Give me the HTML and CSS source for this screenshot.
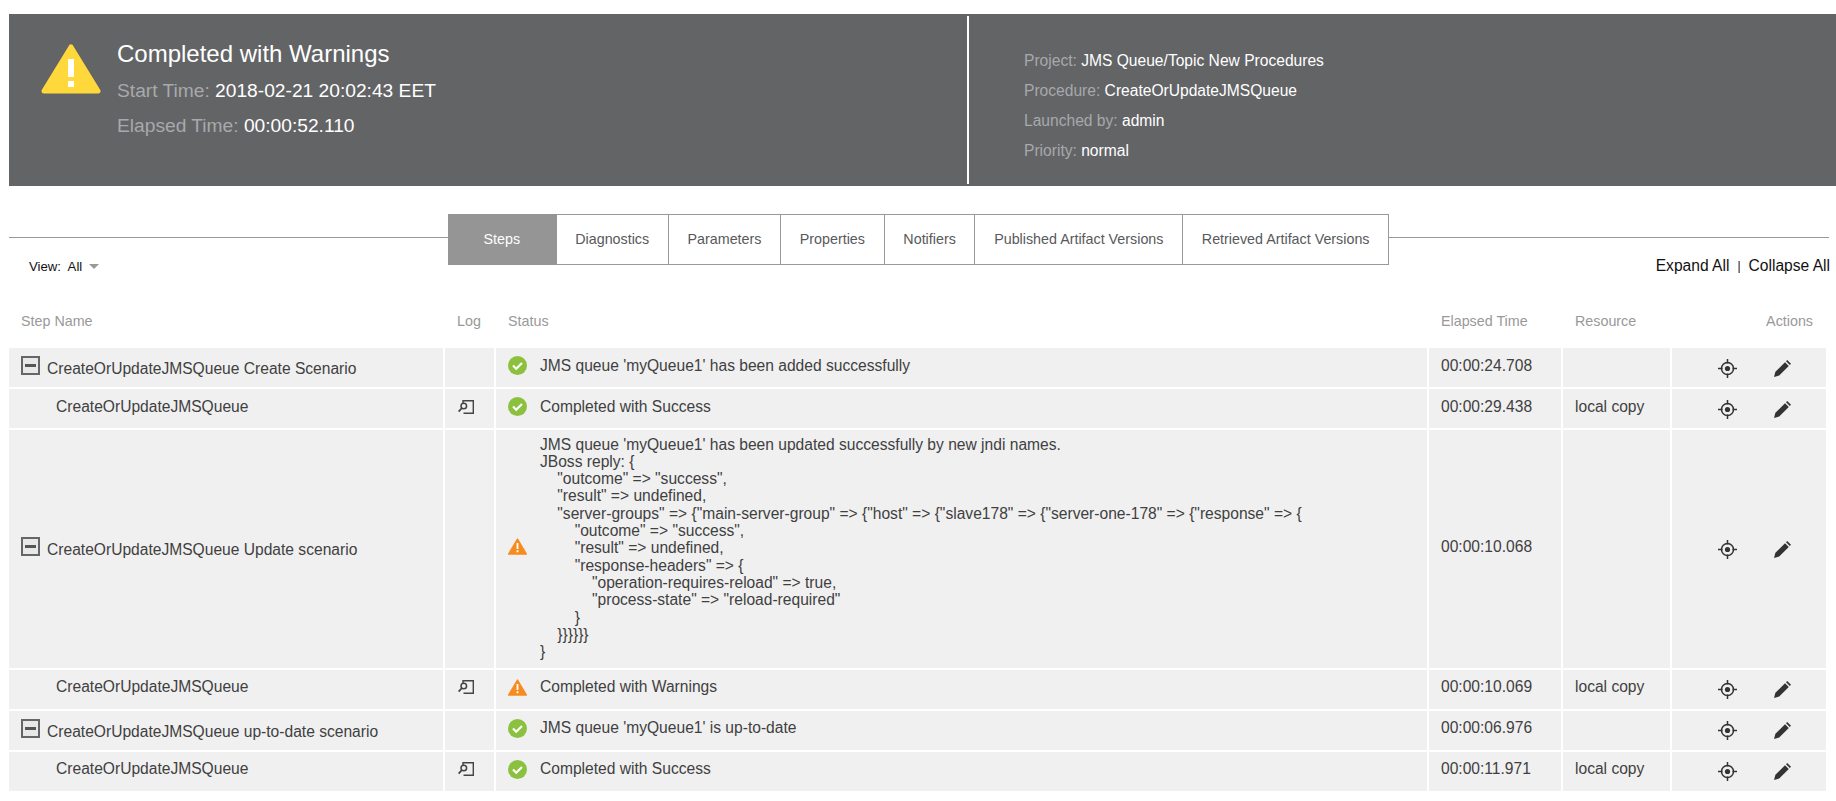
FILE: index.html
```html
<!DOCTYPE html>
<html lang="en">

<head>
    <meta charset="UTF-8">
    <meta name="viewport" content="width=device-width, initial-scale=1.0">
    <title>Job Details</title>
    <link rel="stylesheet" href="styles.css">
</head>

<body>
    <svg class="sprites" aria-hidden="true">
        <symbol id="ok" viewBox="0 0 19 19">
            <circle cx="9.5" cy="9.5" r="9.5" fill="#8cc13f" />
            <path d="M5 9.5l3.2 3.2L14 7" fill="none" stroke="#fff" stroke-width="2.2" />
        </symbol>
        <symbol id="warn" viewBox="0 0 19 17">
            <path d="M9.5 1L18.4 16H.6z" fill="#f68b1f" stroke="#f68b1f" stroke-width="1.4" stroke-linejoin="round" />
            <path d="M8.6 5h1.8v6H8.6zM8.6 12.3h1.8v2H8.6z" fill="#fff" />
        </symbol>
        <symbol id="log" viewBox="0 0 16 14">
            <path d="M5 3V.7H15.3V13.3H5.5" fill="none" stroke="#444" stroke-width="1.4" />
            <circle cx="5.8" cy="6" r="2.8" fill="none" stroke="#444" stroke-width="1.5" />
            <path d="M3.8 8.2L.6 11.6" stroke="#444" stroke-width="1.7" />
        </symbol>
        <symbol id="target" viewBox="0 0 19 19">
            <circle cx="9.5" cy="9.5" r="6" fill="none" stroke="#333" stroke-width="1.5" />
            <circle cx="9.5" cy="9.5" r="2.6" fill="#333" />
            <path d="M9.5 0v4.5M9.5 14.5V19M0 9.5h4.5M14.5 9.5H19" stroke="#333" stroke-width="1.5" />
        </symbol>
        <symbol id="pencil" viewBox="0 0 17 17">
            <path d="M0 17l1.4-5.2L11 2.2l3.8 3.8-9.6 9.6zM12 1.2L13.2 0 17 3.8 15.8 5z" fill="#333" />
        </symbol>
    </svg>

    <header class="summary">
        <div class="summary-left">
            <svg class="big-warn" viewBox="0 0 60 50">
                <path d="M30 3L57 47H3z" fill="#ffd83c" stroke="#ffd83c" stroke-width="5" stroke-linejoin="round" />
                <path d="M27 15h6v18h-6zM27 37h6v6h-6z" fill="#fff" />
            </svg>
            <div class="summary-text">
                <h1 class="summary-title">Completed with Warnings</h1>
                <div class="summary-line"><span class="label">Start Time:</span> 2018-02-21 20:02:43 EET</div>
                <div class="summary-line"><span class="label">Elapsed Time:</span> 00:00:52.110</div>
            </div>
        </div>
        <div class="splitter"></div>
        <div class="summary-right">
            <div><span class="label">Project:</span> JMS Queue/Topic New Procedures</div>
            <div><span class="label">Procedure:</span> CreateOrUpdateJMSQueue</div>
            <div><span class="label">Launched by:</span> admin</div>
            <div><span class="label">Priority:</span> normal</div>
        </div>
    </header>

    <section class="toolbar">
        <div class="side side-left">
            <div class="rule"></div>
            <div class="view">View:&nbsp; All <span class="caret"></span></div>
        </div>
        <nav class="tabs">
            <a class="tab active">Steps</a>
            <a class="tab">Diagnostics</a>
            <a class="tab">Parameters</a>
            <a class="tab">Properties</a>
            <a class="tab">Notifiers</a>
            <a class="tab">Published Artifact Versions</a>
            <a class="tab">Retrieved Artifact Versions</a>
        </nav>
        <div class="side side-right">
            <div class="rule"></div>
            <div class="links"><a>Expand All</a><span class="sep">|</span><a>Collapse All</a></div>
        </div>
    </section>

    <table class="steps">
        <colgroup>
            <col class="c-name">
            <col class="c-log">
            <col class="c-status">
            <col class="c-time">
            <col class="c-res">
            <col class="c-act">
        </colgroup>
        <thead>
            <tr>
                <th>Step Name</th>
                <th>Log</th>
                <th>Status</th>
                <th>Elapsed Time</th>
                <th>Resource</th>
                <th class="th-actions">Actions</th>
            </tr>
        </thead>
        <tbody>
            <tr>
                <td><div class="name"><span class="minus"></span><span class="name-text">CreateOrUpdateJMSQueue Create Scenario</span></div></td>
                <td></td>
                <td><div class="status"><svg class="ico"><use href="#ok" /></svg><span>JMS queue 'myQueue1' has been added successfully</span></div></td>
                <td class="up">00:00:24.708</td>
                <td class="up"></td>
                <td><div class="actions"><svg class="act-target"><use href="#target" /></svg><svg class="act-pencil"><use href="#pencil" /></svg></div></td>
            </tr>
            <tr>
                <td class="child up">CreateOrUpdateJMSQueue</td>
                <td class="up"><svg class="log-ico"><use href="#log" /></svg></td>
                <td><div class="status"><svg class="ico"><use href="#ok" /></svg><span>Completed with Success</span></div></td>
                <td class="up">00:00:29.438</td>
                <td class="up">local copy</td>
                <td><div class="actions"><svg class="act-target"><use href="#target" /></svg><svg class="act-pencil"><use href="#pencil" /></svg></div></td>
            </tr>
            <tr>
                <td><div class="name"><span class="minus"></span><span class="name-text">CreateOrUpdateJMSQueue Update scenario</span></div></td>
                <td></td>
                <td><div class="status"><svg class="ico ico-warn"><use href="#warn" /></svg><pre class="reply">JMS queue 'myQueue1' has been updated successfully by new jndi names.
JBoss reply: {
    "outcome" => "success",
    "result" => undefined,
    "server-groups" => {"main-server-group" => {"host" => {"slave178" => {"server-one-178" => {"response" => {
        "outcome" => "success",
        "result" => undefined,
        "response-headers" => {
            "operation-requires-reload" => true,
            "process-state" => "reload-required"
        }
    }}}}}}
}</pre></div></td>
                <td class="up">00:00:10.068</td>
                <td class="up"></td>
                <td><div class="actions"><svg class="act-target"><use href="#target" /></svg><svg class="act-pencil"><use href="#pencil" /></svg></div></td>
            </tr>
            <tr>
                <td class="child up">CreateOrUpdateJMSQueue</td>
                <td class="up"><svg class="log-ico"><use href="#log" /></svg></td>
                <td><div class="status"><svg class="ico ico-warn"><use href="#warn" /></svg><span>Completed with Warnings</span></div></td>
                <td class="up">00:00:10.069</td>
                <td class="up">local copy</td>
                <td><div class="actions"><svg class="act-target"><use href="#target" /></svg><svg class="act-pencil"><use href="#pencil" /></svg></div></td>
            </tr>
            <tr>
                <td><div class="name"><span class="minus"></span><span class="name-text">CreateOrUpdateJMSQueue up-to-date scenario</span></div></td>
                <td></td>
                <td><div class="status"><svg class="ico"><use href="#ok" /></svg><span>JMS queue 'myQueue1' is up-to-date</span></div></td>
                <td class="up">00:00:06.976</td>
                <td class="up"></td>
                <td><div class="actions"><svg class="act-target"><use href="#target" /></svg><svg class="act-pencil"><use href="#pencil" /></svg></div></td>
            </tr>
            <tr>
                <td class="child up">CreateOrUpdateJMSQueue</td>
                <td class="up"><svg class="log-ico"><use href="#log" /></svg></td>
                <td><div class="status"><svg class="ico"><use href="#ok" /></svg><span>Completed with Success</span></div></td>
                <td class="up">00:00:11.971</td>
                <td class="up">local copy</td>
                <td><div class="actions"><svg class="act-target"><use href="#target" /></svg><svg class="act-pencil"><use href="#pencil" /></svg></div></td>
            </tr>
        </tbody>
    </table>
</body>

</html>
```

FILE: styles.css
```css
body {
    margin: 0;
    padding: 14px 0 0 9px;
    background-color: #fff;
    font-family: "Liberation Sans", Arial, sans-serif;
    font-size: 15.6px;
    color: #404041;
    overflow: hidden;
}

.sprites {
    display: none;
}

.summary {
    display: flex;
    height: 172px;
    background-color: #636466;
    color: #fff;
}

.summary-left {
    display: flex;
    width: 926px;
    padding-left: 32px;
}

.big-warn {
    width: 60px;
    height: 50px;
    margin-top: 30px;
    margin-right: 16px;
}

.summary-text {
    padding-top: 23px;
}

.summary-title {
    margin: 0 0 2px;
    font-size: 24px;
    font-weight: normal;
    line-height: 34px;
}

.summary-line {
    font-size: 19.2px;
    line-height: 35px;
}

.label {
    color: #a7a9ac;
}

.splitter {
    width: 2px;
    margin: 2px 0;
    background-color: #fff;
}

.summary-right {
    padding: 32px 0 0 55px;
    line-height: 30px;
}

.toolbar {
    display: flex;
    margin-top: 28px;
}

.side {
    padding-top: 23px;
}

.side-left {
    width: 439px;
}

.side-right {
    flex: 1;
}

.rule {
    height: 1px;
    background-color: #999;
}

.side-right .rule {
    margin-right: 7px;
}

.view {
    margin: 19px 0 0 20px;
    font-size: 13.2px;
    line-height: 20px;
    color: #111;
}

.caret {
    display: inline-block;
    margin-left: 3px;
    border-left: 5px solid transparent;
    border-right: 5px solid transparent;
    border-top: 5px solid #999;
    vertical-align: 2px;
}

.tabs {
    display: flex;
    height: 51px;
}

.tab {
    display: flex;
    align-items: center;
    padding: 0 18.7px 2px;
    border: 1px solid #999;
    border-left: none;
    font-size: 14.3px;
    color: #58595b;
}

.tab.active {
    padding: 0 35.5px 2px;
    background-color: #959595;
    border-color: #959595;
    color: #fff;
}

.links {
    display: flex;
    justify-content: flex-end;
    margin-top: 18px;
    margin-right: 6px;
    line-height: 20px;
    color: #111;
    white-space: nowrap;
}

.sep {
    margin: 0 8px;
    font-size: 12px;
}

.steps {
    width: 1821px;
    margin: 19px 0 0 -2px;
    table-layout: fixed;
    border-collapse: separate;
    border-spacing: 2px;
}

.c-name { width: 434px; }
.c-log { width: 49px; }
.c-status { width: 931px; }
.c-time { width: 132px; }
.c-res { width: 107px; }
.c-act { width: 154px; }

th {
    height: 45px;
    padding: 0 0 3px 12px;
    font-size: 14.3px;
    font-weight: normal;
    text-align: left;
    color: #999;
}

.th-actions {
    padding-right: 13px;
    text-align: right;
}

td {
    height: 39px;
    padding: 0 0 0 12px;
    background-color: #f0f0f0;
    white-space: nowrap;
}

td.up {
    padding-bottom: 4px;
    box-sizing: border-box;
}

td.child {
    padding-left: 47px;
}

.name {
    display: flex;
    align-items: center;
    gap: 7px;
    padding-bottom: 4px;
}

.name-text {
    padding-top: 7px;
}

.minus {
    position: relative;
    width: 15px;
    height: 15px;
    border: 2px solid #666;
    background-color: #e8e8e8;
}

.minus::after {
    content: "";
    position: absolute;
    left: 2px;
    right: 2px;
    top: 6px;
    height: 3px;
    background-color: #555;
}

.status {
    display: flex;
    align-items: center;
    gap: 13px;
    padding-bottom: 4px;
}

.ico {
    flex: none;
    width: 19px;
    height: 19px;
}

.ico-warn {
    height: 17px;
}

.reply {
    margin: 0;
    padding: 5.6px 0 3.4px;
    font: inherit;
    line-height: 17.3px;
}

.log-ico {
    display: block;
    width: 16px;
    height: 14px;
    margin-left: 1px;
}

.actions {
    display: flex;
    align-items: center;
    justify-content: flex-end;
    gap: 37px;
    padding: 1px 35px 0 0;
}

.act-target {
    width: 19px;
    height: 19px;
}

.act-pencil {
    width: 17px;
    height: 17px;
}
```
